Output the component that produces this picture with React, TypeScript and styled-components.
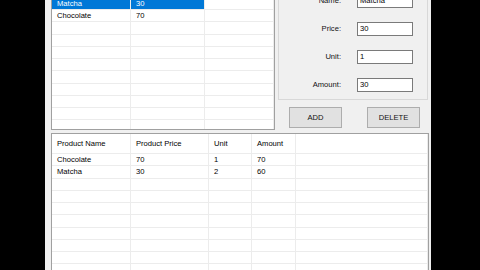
import React from "react";
import styled, { createGlobalStyle } from "styled-components";

const Global = createGlobalStyle`
  html, body { margin: 0; padding: 0; background: #000; }
  body { width: 480px; height: 270px; overflow: hidden; font-family: "Liberation Sans", Arial, sans-serif; }
`;

const Screen = styled.div`
  width: 480px;
  height: 270px;
  background: #000;
  display: flex;
  overflow: hidden;
`;

const Window = styled.div`
  margin-left: 45px;
  margin-top: -10px;
  width: 386px;
  height: 290px;
  background: #f0f0f0;
  padding-left: 6px;
  box-sizing: border-box;
  display: flex;
  flex-direction: column;
  font-size: 7.6px;
  color: #000;
`;

const TopSection = styled.div`
  display: flex;
  height: 140px;
  flex-shrink: 0;
`;

const GridBox = styled.div<{ $w: number; $h: number; $mt: number }>`
  width: ${(p) => p.$w}px;
  height: ${(p) => p.$h}px;
  margin-top: ${(p) => p.$mt}px;
  box-sizing: border-box;
  border: 1px solid #a0a0a0;
  background: #fff;
  overflow: hidden;
  display: flex;
  flex-direction: column;
  flex-shrink: 0;
`;

const Spacer = styled.div<{ $h: number }>`
  height: ${(p) => p.$h}px;
  flex-shrink: 0;
`;

const Row = styled.div<{ $h: number }>`
  display: flex;
  height: ${(p) => p.$h}px;
  flex-shrink: 0;
  box-sizing: border-box;
  border-bottom: 1px solid #ececec;
`;

const Cell = styled.div<{ $w?: number; $sel?: boolean }>`
  ${(p) => (p.$w ? `width: ${p.$w}px; flex-shrink: 0;` : "flex: 1;")}
  box-sizing: border-box;
  border-right: 1px solid #ececec;
  padding-left: 5px;
  display: flex;
  align-items: center;
  white-space: nowrap;
  overflow: hidden;
  background: ${(p) => (p.$sel ? "#0078d7" : "transparent")};
  color: ${(p) => (p.$sel ? "#fff" : "#000")};
`;

const RightCol = styled.div`
  margin-left: 3px;
  width: 150px;
  display: flex;
  flex-direction: column;
`;

const Panel = styled.div`
  height: 110px;
  box-sizing: border-box;
  border: 1px solid #d8d8d8;
  padding-top: 2.5px;
  display: grid;
  grid-template-columns: 62px 56px;
  column-gap: 16px;
  row-gap: 14px;
  align-content: start;
`;

const Label = styled.div`
  height: 14px;
  display: flex;
  align-items: center;
  justify-content: flex-end;
  color: #111;
`;

const TextBox = styled.div`
  height: 14px;
  box-sizing: border-box;
  border: 1px solid #7a7a7a;
  background: #fff;
  padding-left: 2px;
  display: flex;
  align-items: center;
`;

const ButtonRow = styled.div`
  margin-top: 7px;
  padding-left: 11px;
  display: flex;
  gap: 25px;
`;

const Button = styled.div`
  width: 53px;
  height: 21px;
  box-sizing: border-box;
  border: 1px solid #adadad;
  background: #e1e1e1;
  display: flex;
  align-items: center;
  justify-content: center;
  color: #111;
`;

const RH = 12.25;

const topRows: { a: string; b: string; sel?: boolean }[] = [
  { a: "Matcha", b: "30", sel: true },
  { a: "Chocolate", b: "70" },
];

const bottomRows = [
  ["Chocolate", "70", "1", "70"],
  ["Matcha", "30", "2", "60"],
];

const bottomCols = [79, 78, 43, 44];

export default function App() {
  const topFill = Array.from({ length: 11 });
  const bottomFill = Array.from({ length: 10 });
  return (
    <Screen>
      <Global />
      <Window>
        <TopSection>
          <GridBox $w={224} $h={133.25} $mt={6.75}>
            <Spacer $h={0} />
            {topFill.map((_, i) => {
              const r = topRows[i];
              return (
                <Row key={i} $h={RH}>
                  <Cell $w={79} $sel={r?.sel}>{r?.a}</Cell>
                  <Cell $w={74} $sel={r?.sel}>{r?.b}</Cell>
                  <Cell />
                </Row>
              );
            })}
          </GridBox>
          <RightCol>
            <Panel>
              <Label>Name:</Label>
              <TextBox>Matcha</TextBox>
              <Label>Price:</Label>
              <TextBox>30</TextBox>
              <Label>Unit:</Label>
              <TextBox>1</TextBox>
              <Label>Amount:</Label>
              <TextBox>30</TextBox>
            </Panel>
            <ButtonRow>
              <Button>ADD</Button>
              <Button>DELETE</Button>
            </ButtonRow>
          </RightCol>
        </TopSection>
        <GridBox $w={378} $h={160} $mt={3}>
          <Row $h={20}>
            {["Product Name", "Product Price", "Unit", "Amount"].map((h, i) => (
              <Cell key={h} $w={bottomCols[i]}>{h}</Cell>
            ))}
            <Cell />
          </Row>
          {bottomFill.map((_, i) => {
            const r = bottomRows[i];
            return (
              <Row key={i} $h={RH}>
                {bottomCols.map((w, j) => (
                  <Cell key={j} $w={w}>{r?.[j]}</Cell>
                ))}
                <Cell />
              </Row>
            );
          })}
        </GridBox>
      </Window>
    </Screen>
  );
}
